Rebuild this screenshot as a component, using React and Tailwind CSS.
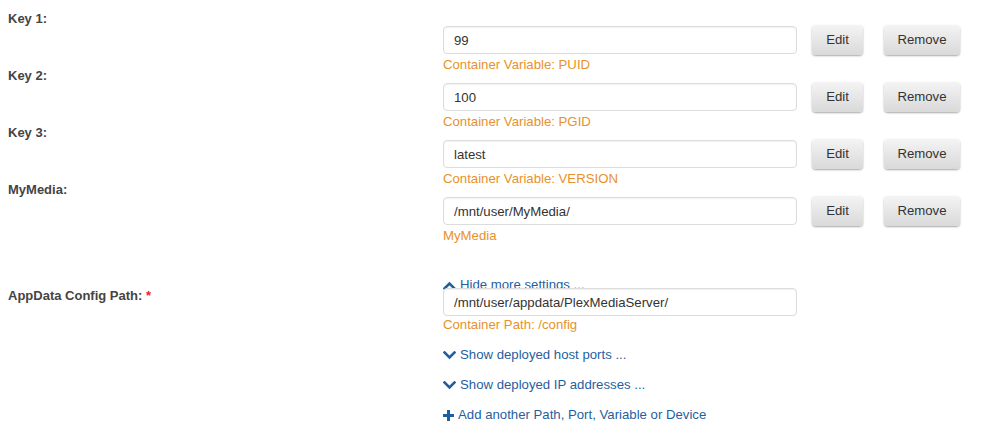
import React from 'react';

const font = { fontFamily: '"Liberation Sans", Arial, sans-serif' };

const vars = [
  { label: 'Key 1:', value: '99', note: 'Container Variable: PUID' },
  { label: 'Key 2:', value: '100', note: 'Container Variable: PGID' },
  { label: 'Key 3:', value: 'latest', note: 'Container Variable: VERSION' },
  { label: 'MyMedia:', value: '/mnt/user/MyMedia/', note: 'MyMedia' },
];

const Chevron = ({ up }) => (
  <svg width="13" height="9" viewBox="0 0 13 9" className="shrink-0">
    <polyline
      points={up ? '1.5,7.5 6.5,2.5 11.5,7.5' : '1.5,1.5 6.5,6.5 11.5,1.5'}
      fill="none"
      stroke="#1f5f9f"
      strokeWidth="2.6"
      strokeLinecap="square"
    />
  </svg>
);

const Plus = () => (
  <svg width="11" height="11" viewBox="0 0 11 11" className="shrink-0">
    <path d="M4 0h3v4h4v3H7v4H4V7H0V4h4z" fill="#1f5f9f" />
  </svg>
);

const Field = ({ value, className = '' }) => (
  <input
    readOnly
    value={value}
    className={`h-[28px] w-[354px] rounded-[4px] border border-[#dcdcdc] bg-white pl-[10px] text-[13.2px] text-[#333] shadow-[inset_0_1px_2px_rgba(0,0,0,0.06)] outline-none ${className}`}
    style={font}
  />
);

const Btn = ({ children, className = '' }) => (
  <button
    className={`h-[30px] rounded-[4px] bg-gradient-to-b from-[#f4f4f4] to-[#d9d9d9] text-[13.2px] text-[#333] shadow-[0_1px_2px_rgba(0,0,0,0.35)] ${className}`}
    style={font}
  >
    {children}
  </button>
);

const LinkRow = ({ icon, children, className = '' }) => (
  <div className={`flex items-center gap-[4px] leading-[16px] text-[13.2px] text-[#1f5f9f] ${className}`}>
    {icon}
    <span>{children}</span>
  </div>
);

export default function App() {
  return (
    <div className="w-[1000px] h-[432px] overflow-hidden bg-white pt-[26px]" style={font}>
      {vars.map((v) => (
        <div key={v.label} className="flex items-start h-[57px]">
          <div className="w-[443px] -mt-[14px] pl-[8px] text-[13px] leading-[14px] font-bold text-[#444]">{v.label}</div>
          <div className="flex flex-col">
            <div className="flex items-start">
              <Field value={v.value} />
              <Btn className="ml-[15px] -mt-[1px] w-[51px]">Edit</Btn>
              <Btn className="ml-[21px] -mt-[1px] w-[76px]">Remove</Btn>
            </div>
            <div className="mt-[2px] text-[13.2px] leading-[16px] text-[#e8912c]">{v.note}</div>
          </div>
        </div>
      ))}

      <div className="flex mt-[23px]">
        <div className="w-[443px]" />
        <LinkRow icon={<Chevron up />}>Hide more settings ...</LinkRow>
      </div>

      <div className="flex items-start -mt-[5px]">
        <div className="w-[443px] pt-[1px] pl-[8px] text-[13px] leading-[14px] font-bold text-[#444]">
          AppData Config Path: <span className="text-[#e22]">*</span>
        </div>
        <div className="flex flex-col">
          <Field value="/mnt/user/appdata/PlexMediaServer/" className="relative" />
          <div className="mt-[1px] text-[13.2px] leading-[16px] text-[#e8912c]">Container Path: /config</div>
          <LinkRow icon={<Chevron />} className="mt-[14px]">Show deployed host ports ...</LinkRow>
          <LinkRow icon={<Chevron />} className="mt-[14px]">Show deployed IP addresses ...</LinkRow>
          <LinkRow icon={<Plus />} className="mt-[14px]">Add another Path, Port, Variable or Device</LinkRow>
        </div>
      </div>
    </div>
  );
}
